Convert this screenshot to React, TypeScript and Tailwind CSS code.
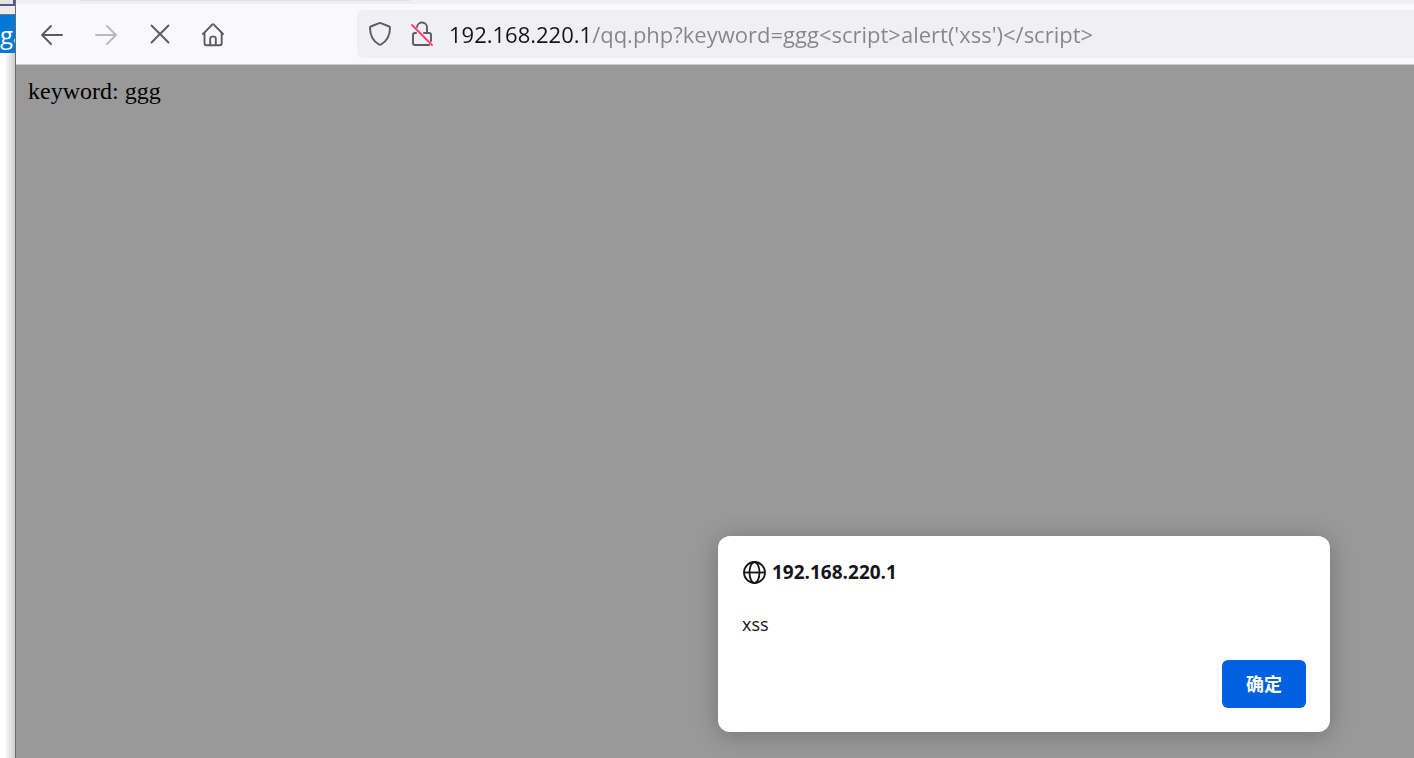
import type { ReactNode } from "react";

const HOST = "192.168.220.1";
const URL_TEXT = "192.168.220.1/qq.php?keyword=ggg<script>alert('xss')</script>";

export default function App() {
  return (
    <div className="flex min-h-screen overflow-hidden bg-white font-['Open_Sans','Noto_Sans_CJK_SC',sans-serif] text-[#15141a]">
      <BackgroundWindow />

      <div className="flex min-w-0 flex-1 flex-col border-l border-[#6b6b6b]">
        <TabStrip />
        <Toolbar />

        <main className="flex flex-1 flex-col justify-between bg-[#99999a]">
          <p className="px-3 pt-3 font-['Liberation_Serif',serif] text-2xl leading-7 text-black">
            keyword: ggg
          </p>
          <AlertDialog />
        </main>
      </div>
    </div>
  );
}

// Sliver of the window that sits behind the browser.
function BackgroundWindow() {
  return (
    <aside className="flex w-[15px] shrink-0 flex-col overflow-hidden bg-linear-to-r from-white from-30% to-[#cfcfcf]">
      <div className="h-[6px] border-r-2 border-b-2 border-[#5b5486] bg-[#e4e4e4]" />
      <div className="h-2 bg-[#ececec]" />
      <div className="h-[39px] border-t border-[#777777] bg-[#0078d7] text-2xl leading-10 text-white">
        ga
      </div>
    </aside>
  );
}

function TabStrip() {
  return (
    <div className="flex h-1 shrink-0 bg-[#f0f0f0] pl-16">
      <div className="h-px w-[330px] bg-[#e2e2e2]" />
    </div>
  );
}

function Toolbar() {
  return (
    <header className="flex h-[61px] shrink-0 items-center border-b border-[#cccccf] bg-[#f9f9fb] text-[#5b5b66]">
      <nav className="flex gap-6 pl-[21px]">
        <ToolbarButton label="Back">
          <path d="M5 16h20M14 7l-9 9 9 9" />
        </ToolbarButton>
        <ToolbarButton label="Forward" disabled>
          <path d="M5 16h20M16 7l9 9-9 9" />
        </ToolbarButton>
        <ToolbarButton label="Stop">
          <path d="m6.5 6.5 17 17M23.5 6.5l-17 17" />
        </ToolbarButton>
        <ToolbarButton label="Home">
          <path d="M4 15 13.2 5.6a1.2 1.2 0 0 1 1.7 0L24 15M5.5 13.8v10.4a2 2 0 0 0 2 2h13.2a2 2 0 0 0 2-2V13.8M11.2 26v-6.4a2 2 0 0 1 2-2h1.6a2 2 0 0 1 2 2V26" />
        </ToolbarButton>
      </nav>

      <div className="ml-32 flex h-12 flex-1 items-center rounded-l-md bg-[#f0f0f4] pl-2">
        <button type="button" aria-label="Tracking protection" className="size-[30px]">
          <ToolbarIcon>
            <path d="M14.2 4.1a2 2 0 0 1 1.6 0l8.4 3.4a1.3 1.3 0 0 1 .8 1.2c0 7-2 12.800-9 16.800a2 2 0 0 1-2 0C7 21.500 5 15.700 5 8.700a1.300 1.300 0 0 1 .8-1.200Z" />
          </ToolbarIcon>
        </button>
        <button type="button" aria-label="Connection is not secure" className="ml-3 size-[30px]">
          <ToolbarIcon>
            <path d="M10 8a5 5 0 0 1 10 1v5M9 14H8a2 2 0 0 0-2 2v8a2 2 0 0 0 2 2h14M17 14h5a2 2 0 0 1 2 2v6" />
            <path d="m5 6 20 20" stroke="#ff4068" />
          </ToolbarIcon>
        </button>
        <input
          type="text"
          aria-label="Address"
          defaultValue={URL_TEXT}
          spellCheck={false}
          className="ml-3 min-w-0 flex-1 bg-linear-to-r from-[#15141a] from-[143px] to-[#85858b] to-[143px] bg-clip-text text-[22px] leading-8 text-transparent outline-none"
        />
      </div>
    </header>
  );
}

function ToolbarButton({
  label,
  disabled = false,
  children,
}: {
  label: string;
  disabled?: boolean;
  children: ReactNode;
}) {
  return (
    <button type="button" aria-label={label} disabled={disabled} className="size-[30px] disabled:opacity-40">
      <ToolbarIcon>{children}</ToolbarIcon>
    </button>
  );
}

function ToolbarIcon({ children }: { children: ReactNode }) {
  return (
    <svg
      viewBox="0 0 30 30"
      className="size-[30px]"
      fill="none"
      stroke="currentColor"
      strokeWidth="1.9"
      strokeLinecap="round"
      strokeLinejoin="round"
      aria-hidden="true"
    >
      {children}
    </svg>
  );
}

function AlertDialog() {
  return (
    <section
      role="alertdialog"
      aria-labelledby="alert-title"
      aria-describedby="alert-message"
      className="mr-[84px] mb-[26px] w-[612px] self-end rounded-xl bg-white p-6 shadow-[0_3px_24px_rgba(0,0,0,0.25)]"
    >
      <h1 id="alert-title" className="flex items-center gap-1.5 text-[19px] leading-6 font-bold">
        <GlobeIcon />
        {HOST}
      </h1>
      <p id="alert-message" className="mt-7 text-lg leading-6">
        xss
      </p>
      <div className="mt-6 flex justify-end">
        <button
          type="button"
          className="h-12 rounded-md bg-[#0061e0] px-6 text-lg font-bold text-[#fbfbfe]"
        >
          确定
        </button>
      </div>
    </section>
  );
}

function GlobeIcon() {
  return (
    <svg
      viewBox="0 0 24 24"
      className="size-6"
      fill="none"
      stroke="currentColor"
      strokeWidth="1.8"
      aria-hidden="true"
    >
      <circle cx="12.500" cy="12.500" r="10.500" />
      <ellipse cx="12.500" cy="12.500" rx="5" ry="10.500" />
      <path d="M2 12.500h21" />
    </svg>
  );
}
